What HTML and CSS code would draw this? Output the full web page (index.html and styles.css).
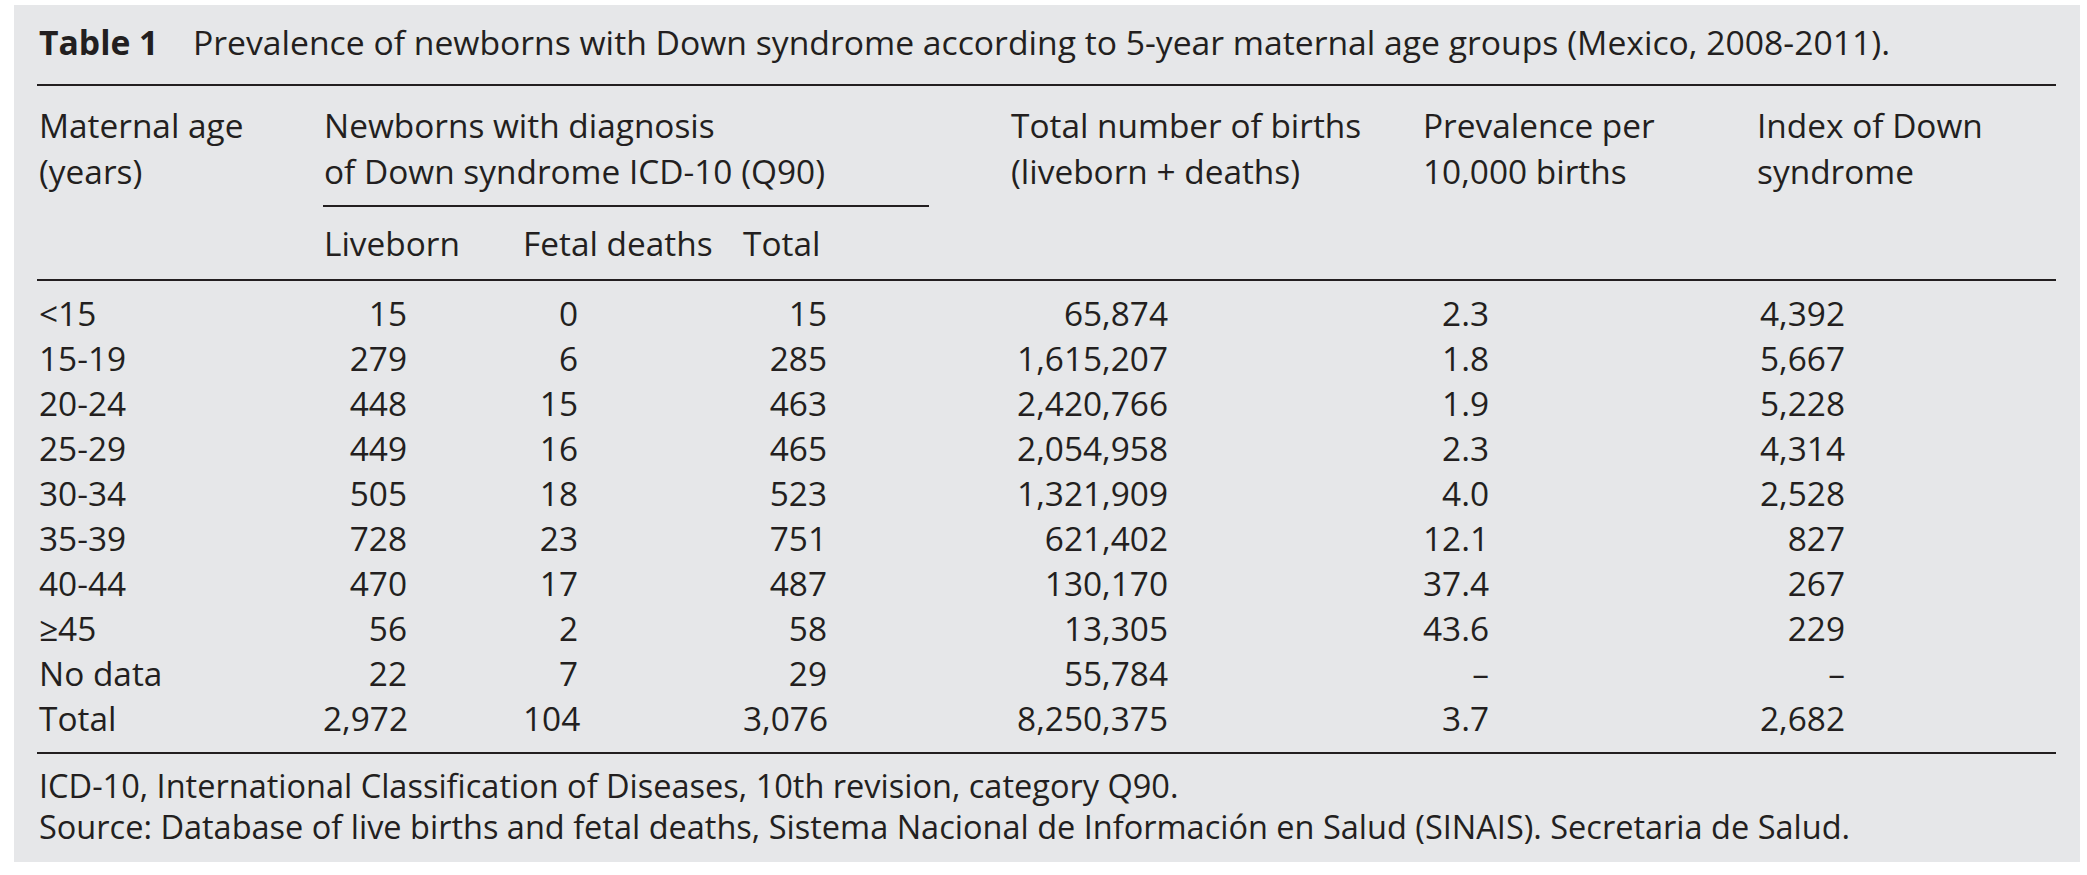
FILE: index.html
```html
<!DOCTYPE html>
<html lang="en">
<head>
<meta charset="utf-8">
<title>Table 1</title>
<link rel="stylesheet" href="styles.css">
</head>
<body>
<div class="panel">
  <div class="caption"><span class="label">Table 1</span><span class="ctext">Prevalence of newborns with Down syndrome according to 5-year maternal age groups (Mexico, 2008-2011).</span></div>
  <table class="data">
    <colgroup>
      <col class="c1"><col class="c2"><col class="c3"><col class="c4"><col class="c5"><col class="c6"><col class="c7">
    </colgroup>
    <thead>
      <tr>
        <th rowspan="2" class="h h1 hb">Maternal age<br>(years)</th>
        <th colspan="3" class="h h2 sub">Newborns with diagnosis<br>of Down syndrome ICD-10 (Q90)</th>
        <th rowspan="2" class="h h5 hb">Total number of births<br>(liveborn + deaths)</th>
        <th rowspan="2" class="h hb">Prevalence per<br>10,000 births</th>
        <th rowspan="2" class="h hb">Index of Down<br>syndrome</th>
      </tr>
      <tr>
        <th class="h s hb h2">Liveborn</th>
        <th class="h s hb">Fetal deaths</th>
        <th class="h s hb">Total</th>
      </tr>
    </thead>
    <tbody>
      <tr class="first"><td>&lt;15</td><td>15</td><td>0</td><td>15</td><td>65,874</td><td>2.3</td><td>4,392</td></tr>
      <tr><td>15-19</td><td>279</td><td>6</td><td>285</td><td>1,615,207</td><td>1.8</td><td>5,667</td></tr>
      <tr><td>20-24</td><td>448</td><td>15</td><td>463</td><td>2,420,766</td><td>1.9</td><td>5,228</td></tr>
      <tr><td>25-29</td><td>449</td><td>16</td><td>465</td><td>2,054,958</td><td>2.3</td><td>4,314</td></tr>
      <tr><td>30-34</td><td>505</td><td>18</td><td>523</td><td>1,321,909</td><td>4.0</td><td>2,528</td></tr>
      <tr><td>35-39</td><td>728</td><td>23</td><td>751</td><td>621,402</td><td>12.1</td><td>827</td></tr>
      <tr><td>40-44</td><td>470</td><td>17</td><td>487</td><td>130,170</td><td>37.4</td><td>267</td></tr>
      <tr><td>&ge;45</td><td>56</td><td>2</td><td>58</td><td>13,305</td><td>43.6</td><td>229</td></tr>
      <tr><td>No data</td><td>22</td><td>7</td><td>29</td><td>55,784</td><td>&ndash;</td><td>&ndash;</td></tr>
      <tr class="last"><td>Total</td><td>2,972</td><td>104</td><td>3,076</td><td>8,250,375</td><td>3.7</td><td>2,682</td></tr>
    </tbody>
  </table>
  <div class="notes">
    <p>ICD-10, International Classification of Diseases, 10th revision, category Q90.</p>
    <p>Source: Database of live births and fetal deaths, Sistema Nacional de Información en Salud (SINAIS). Secretaria de Salud.</p>
  </div>
</div>
</body>
</html>
```
FILE: styles.css
```css
html, body {
  margin: 0;
  padding: 0;
  background: #ffffff;
}

body {
  padding-top: 5px;
  font-family: "Open Sans", "Noto Sans", sans-serif;
  color: #231f20;
}

.panel {
  margin-left: 14px;
  width: 2066px;
  height: 857px;
  box-sizing: border-box;
  padding: 15px 24px 0 23px;
  background: #e6e7e9;
}

.caption {
  padding-left: 2px;
  font-size: 33.7px;
  line-height: 44px;
  white-space: nowrap;
}

.label {
  display: inline-block;
  width: 154px;
  font-weight: 700;
}

.data {
  width: 100%;
  margin-top: 20px;
  border-collapse: separate;
  border-spacing: 0;
  table-layout: fixed;
  border-top: 2px solid #231f20;
  font-size: 33.4px;
}

.c1 { width: 286px; }
.c2 { width: 200px; }
.c3 { width: 220px; }
.c4 { width: 186px; }
.c5 { width: 494px; }
.c6 { width: 334px; }
.c7 { width: 299px; }

th, td {
  padding: 0;
  white-space: nowrap;
  font-weight: 400;
}

.h {
  text-align: left;
  vertical-align: top;
  line-height: 46px;
  padding-top: 16px;
}

.h1 { padding-left: 2px; }
.h2 { padding-left: 1px; }
.h5 { padding-left: 82px; }

.sub {
  padding-bottom: 11px;
  border-bottom: 2px solid #231f20;
}

.s {
  padding-top: 13px;
  padding-bottom: 13px;
}

.hb {
  border-bottom: 2px solid #231f20;
}

td {
  line-height: 45px;
  text-align: right;
}

td:nth-child(1) { text-align: left; padding-left: 2px; }
td:nth-child(2) { padding-right: 116px; }
td:nth-child(3) { padding-right: 165px; }
td:nth-child(4) { padding-right: 102px; }
td:nth-child(5) { padding-right: 255px; }
td:nth-child(6) { padding-right: 268px; }
td:nth-child(7) { padding-right: 211px; }

tr.first td { padding-top: 9.5px; }
tr.last td {
  padding-bottom: 11.5px;
  border-bottom: 2px solid #231f20;
}

.notes {
  margin-top: 10.5px;
  padding-left: 2px;
  font-size: 32.5px;
  line-height: 41px;
}

.notes p {
  margin: 0;
  white-space: nowrap;
}
```
